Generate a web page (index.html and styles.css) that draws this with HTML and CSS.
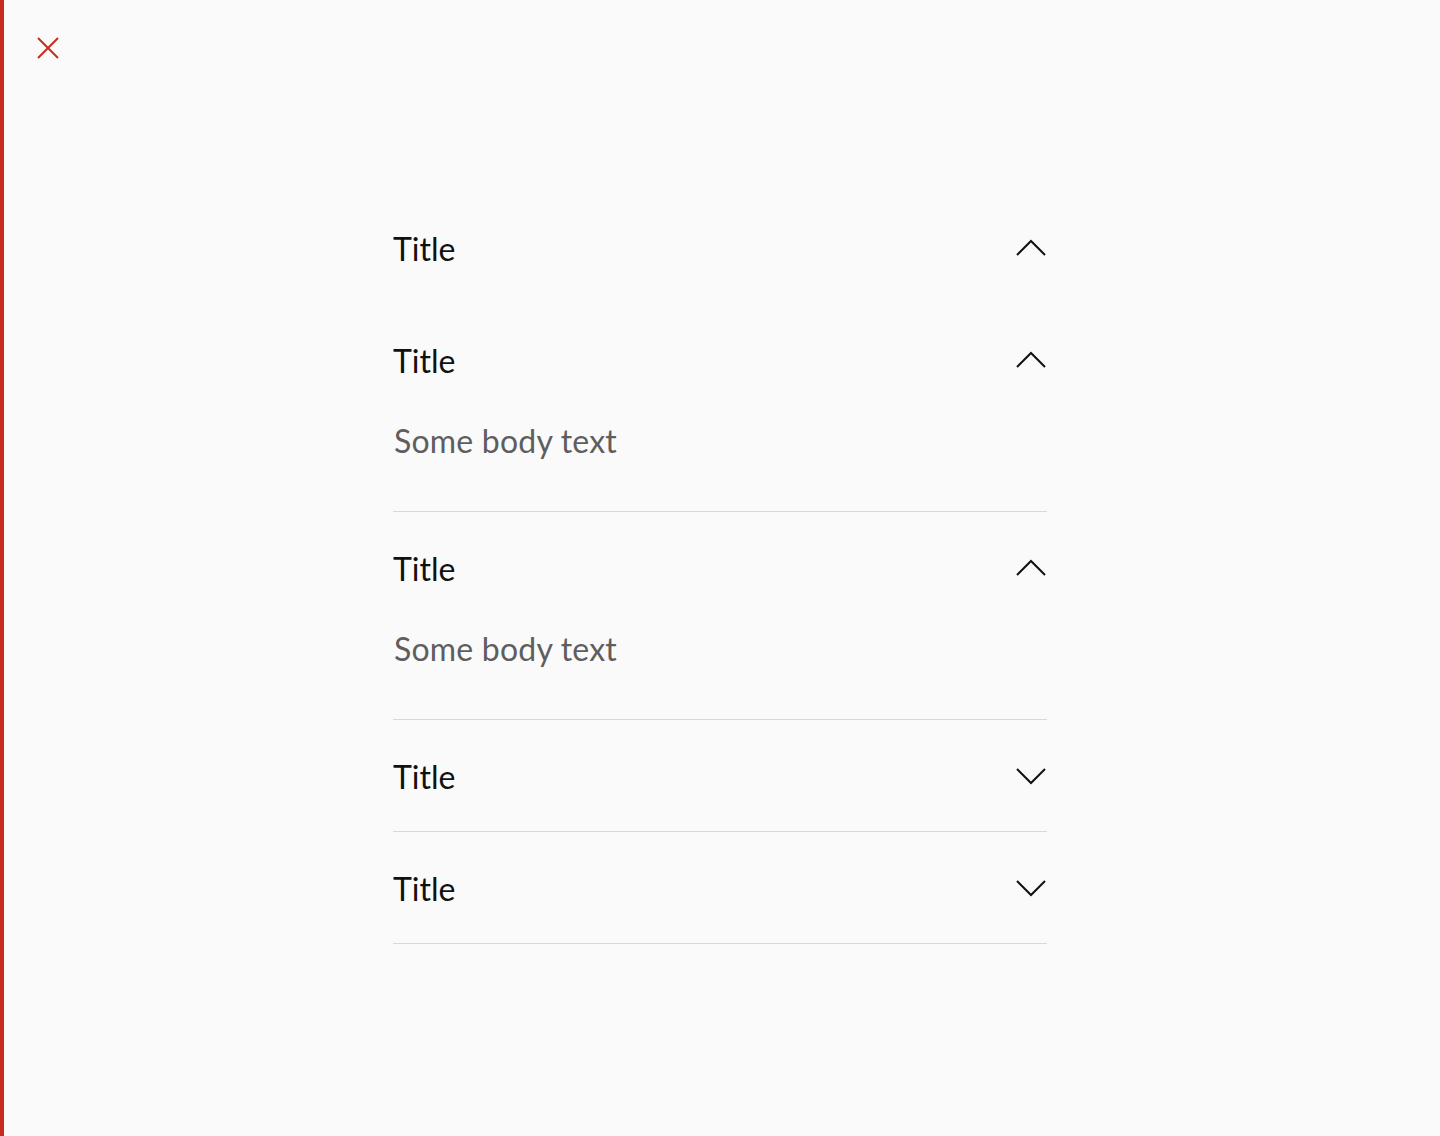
FILE: index.html
```html
<!DOCTYPE html>
<html>
<head>
  <title>Accordion</title>
  <link rel="stylesheet" href="styles.css">
</head>
<body>
  <div class="page">
    <div class="topbar">
      <button class="close" aria-label="Close">
        <svg width="22" height="22" viewBox="0 0 22 22">
          <path d="M1 1 L21 21 M21 1 L1 21" stroke="#c62a21" stroke-width="2" fill="none"/>
        </svg>
      </button>
    </div>

    <div class="accordion">
      <div class="item first">
        <div class="item-head">
          <span class="item-title">Title</span>
          <svg class="chevron" width="32" height="32" viewBox="0 0 32 32">
            <path d="M2 23 L16 9 L30 23" stroke="#111" stroke-width="2" fill="none"/>
          </svg>
        </div>
      </div>

      <div class="item">
        <div class="item-head">
          <span class="item-title">Title</span>
          <svg class="chevron" width="32" height="32" viewBox="0 0 32 32">
            <path d="M2 23 L16 9 L30 23" stroke="#111" stroke-width="2" fill="none"/>
          </svg>
        </div>
        <div class="item-body">Some body text</div>
      </div>

      <div class="item">
        <div class="item-head">
          <span class="item-title">Title</span>
          <svg class="chevron" width="32" height="32" viewBox="0 0 32 32">
            <path d="M2 23 L16 9 L30 23" stroke="#111" stroke-width="2" fill="none"/>
          </svg>
        </div>
        <div class="item-body">Some body text</div>
      </div>

      <div class="item">
        <div class="item-head">
          <span class="item-title">Title</span>
          <svg class="chevron" width="32" height="32" viewBox="0 0 32 32">
            <path d="M2 9 L16 23 L30 9" stroke="#111" stroke-width="2" fill="none"/>
          </svg>
        </div>
      </div>

      <div class="item">
        <div class="item-head">
          <span class="item-title">Title</span>
          <svg class="chevron" width="32" height="32" viewBox="0 0 32 32">
            <path d="M2 9 L16 23 L30 9" stroke="#111" stroke-width="2" fill="none"/>
          </svg>
        </div>
      </div>
    </div>
  </div>
</body>
</html>
```

FILE: styles.css
```css
/* Page */
body {
  margin: 0;
  background-color: #fafafa;
  font-family: Lato, "Open Sans", sans-serif;
  color: #111;
}

.page {
  min-height: 100vh;
  box-shadow: inset 4px 0 0 #c62a21;
}

.topbar {
  height: 192px;
  padding: 37px 0 0 37px;
  box-sizing: border-box;
}

.close {
  display: block;
  width: 22px;
  height: 22px;
  padding: 0;
  border: none;
  background: none;
  cursor: pointer;
}

.close svg {
  display: block;
}

/* Accordion */
.accordion {
  width: 654px;
  margin: 0 auto;
}

.item {
  border-bottom: 1px solid #d9d9d9;
}

.item.first {
  border-bottom-color: transparent;
}

.item-head {
  height: 111px;
  display: flex;
  align-items: center;
  justify-content: space-between;
}

.item-title {
  padding-top: 2px;
  font-size: 32px;
  line-height: 40px;
}

.chevron {
  display: block;
}

.item-body {
  padding: 6px 0 50px 1px;
  font-size: 32px;
  line-height: 40px;
  letter-spacing: 0.2px;
  color: #5e5e5e;
}
```
